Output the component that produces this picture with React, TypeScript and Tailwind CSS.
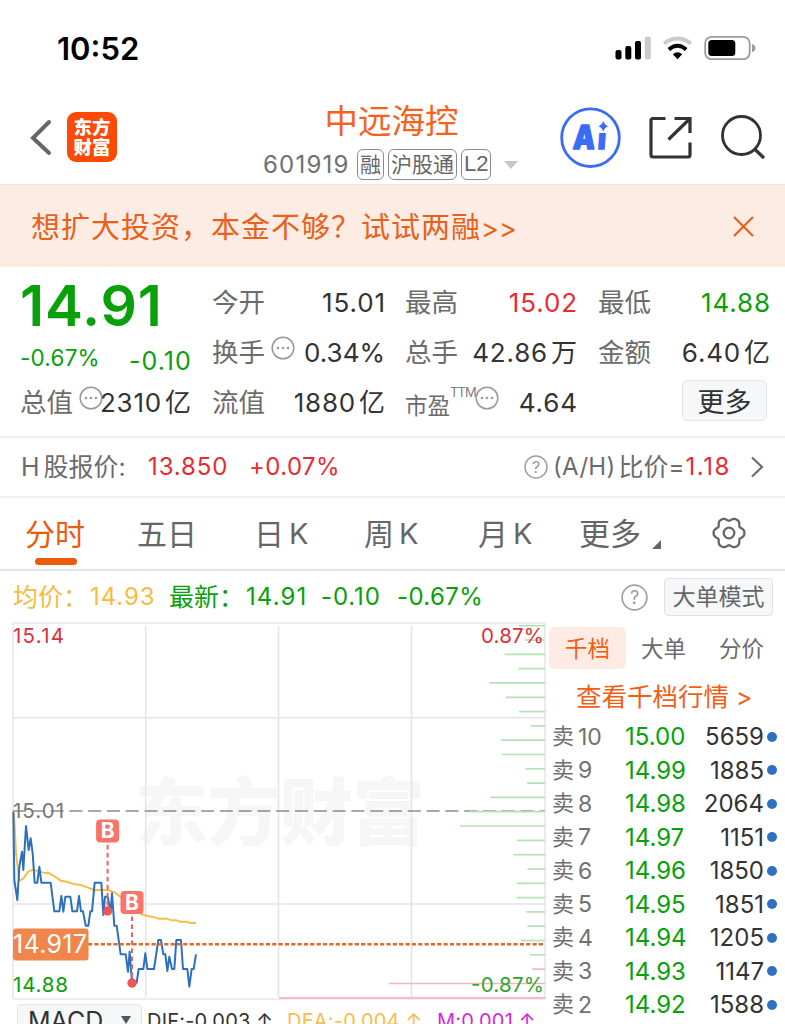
import React from "react";

const DEPTH: [string, string, string][] = [
  ["10", "15.00", "5659"],
  ["9", "14.99", "1885"],
  ["8", "14.98", "2064"],
  ["7", "14.97", "1151"],
  ["6", "14.96", "1850"],
  ["5", "14.95", "1851"],
  ["4", "14.94", "1205"],
  ["3", "14.93", "1147"],
  ["2", "14.92", "1588"],
];

const VOLUME_STARTS = [
  519, 525, 504.7, 518.3, 489.3, 506, 519, 530.7, 501, 502, 525.3, 527, 490.7, 469, 460, 516.7,
  513.7, 527.3, 517, 516.7, 526.3, 527.3, 521, 529.7, 532.3, 389, 279,
];

const PRICE_POINTS =
  "40,125 43,330 52,390 58,290 66,245 70,300 78,168 86,240 92,205 98,250 104,338 112,338 118,290 124,338 152,338 163,424 178,424 184,378 190,425 196,380 211,380 217,424 231,424 237,378 243,424 249,424 257,467 265,467 271,424 276,424 284,338 304,338 310,435 315,380 323,380 332,425 336,370 343,467 350,467 362,553 377,553 384,605 389,545 396,638 410,638 416,597 430,597 436,550 442,597 462,597 475,510 483,510 490,553 496,553 502,603 508,560 516,597 523,597 529,510 543,510 549,597 562,597 568,650 575,597 581,597 588,553";

const AVERAGE_POINTS =
  "42,130 48,250 58,333 70,325 85,305 98,299 115,303 130,308 148,310 165,320 182,332 200,335 220,342 240,344 262,352 282,360 325,360 345,368 358,378 385,400 410,425 430,435 455,440 475,446 500,446 515,451 530,451 540,455 560,455 570,459 588,459";

const GEAR_PATH =
  Array.from({ length: 120 }, (_, i) => {
    const a = (i / 120) * Math.PI * 2;
    const r = 14.1 + 1.6 * Math.cos(6 * a) - 0.3 * Math.cos(12 * a);
    return `${i ? "L" : "M"}${(17 + r * Math.cos(a)).toFixed(2)} ${(17 + r * Math.sin(a)).toFixed(2)}`;
  }).join("") + "Z";

function StatusBar() {
  return (
    <div className="flex h-24 items-center justify-between pr-[29px] pl-[57px]">
      <div className="pt-[1px] text-[31px] font-semibold text-black">10:52</div>
      <svg width="141" height="26" viewBox="615 35 141 26">
        <rect x="615.5" y="50" width="6" height="9.5" rx="2" />
        <rect x="625.3" y="46" width="6" height="13.5" rx="2" />
        <rect x="635" y="41" width="6" height="18.5" rx="2" />
        <rect x="644.8" y="36.5" width="6" height="23" rx="2" fill="#cbcbcb" />
        <path d="M664 43.500Q677.500 33.500 691 43.500" fill="none" stroke="#cbcbcb" strokeWidth="4" />
        <path d="M668.800 49.500Q677.500 42 686.200 49.500" fill="none" stroke="#000" strokeWidth="3.800" />
        <path d="M672.800 54.300Q677.500 50.300 682.200 54.300L677.500 59.300Z" />
        <rect x="705.200" y="36.800" width="44.500" height="22.400" rx="6.500" fill="none" stroke="#9b9b9b" strokeWidth="1.800" />
        <rect x="708.300" y="40" width="27" height="16" rx="3.500" />
        <path d="M752 44v8Q755.500 51 755.500 48T752 44Z" fill="#9b9b9b" />
      </svg>
    </div>
  );
}

function Badge({ children }: { children: React.ReactNode }) {
  return (
    <span className="flex h-[31px] items-center rounded-[6px] border-[1.500px] border-[#8a8a8a] px-[2px] text-[21px] text-[#666]">
      {children}
    </span>
  );
}

function Header() {
  return (
    <div className="flex h-[89px] border-b border-[#e9e5e9]">
      <div className="flex w-[263px] items-start pt-4 pl-[30px]">
        <svg className="mt-[6px]" width="22" height="38" viewBox="0 0 22 38" fill="none" stroke="#666" strokeWidth="4" strokeLinecap="round">
          <path d="M19 4 3 20l16 15" />
        </svg>
        <div className="ml-[15px] flex h-[50px] w-[50px] flex-col items-center justify-center rounded-[9px] bg-[#fe4a04] text-[18.500px] leading-[20.500px] font-black text-white">
          <span>东方</span>
          <span>财富</span>
        </div>
      </div>
      <div className="flex w-[257px] flex-col items-center">
        <div className="mt-[3px] text-[33.500px] leading-[44px] text-[#f4631e]">中远海控</div>
        <div className="mt-[6px] flex items-center self-start">
          <span className="mr-[7px] w-[87px] pt-[1px] text-[24px] tracking-[1.200px] text-[#707070]">601919</span>
          <span className="flex gap-[4px]">
            <Badge>融</Badge>
            <Badge>沪股通</Badge>
            <Badge><span className="font-['Liberation_Sans'] text-[22px]">L2</span></Badge>
          </span>
          <svg className="ml-3 shrink-0" width="16" height="8" viewBox="0 0 16 8">
            <path d="M1 0h14L8 8Z" fill="#c6c6c6" />
          </svg>
        </div>
      </div>
      <svg className="ml-[38px] mt-2" width="212" height="68" viewBox="558 104 212 68" fill="none">
        <circle cx="590.500" cy="137.700" r="28.800" stroke="#3a6cf6" strokeWidth="2.800" />
        <g transform="translate(572.500 148.800) skewX(-4) scale(.84 1)" fill="#3a6cf6" stroke="#3a6cf6" strokeWidth="1.400" strokeLinejoin="round" fontSize="33" fontWeight="900">
          <text x="0 29.500">Ai</text>
        </g>
        <path d="M597.500 119.500h13.500v13.500h-13.500z" fill="#fff" />
        <path d="M603.300 121q1.300 4 5 5.300q-3.700 1.300-5 5.300q-1.300-4-5-5.300q3.700-1.300 5-5.300Z" fill="#3a6cf6" />
        <g stroke="#333" strokeWidth="3.200">
          <path d="M665.500 118.500H653q-2 0-2 2V155q0 2 2 2h35q2 0 2-2V142.500" />
          <path d="M674.500 118.500H690V133M689 119.500 668.500 139.500" />
          <circle cx="741.500" cy="135.500" r="19" strokeWidth="2.800" />
          <path d="M754 148.500l10 9.500" />
        </g>
      </svg>
    </div>
  );
}

function MoreDot({ className = "" }: { className?: string }) {
  return (
    <svg className={"shrink-0 " + className} width="24" height="24" viewBox="0 0 24 24" fill="#999">
      <circle cx="12" cy="12" r="10.800" fill="none" stroke="#999" strokeWidth="1.500" />
      <circle cx="7" cy="12" r="1.300" />
      <circle cx="12" cy="12" r="1.300" />
      <circle cx="17" cy="12" r="1.300" />
    </svg>
  );
}

function Help({ size, className = "" }: { size: number; className?: string }) {
  return (
    <svg className={"shrink-0 " + className} width={size} height={size} viewBox="0 0 24 24">
      <circle cx="12" cy="12" r="11" fill="none" stroke="#a0a0a0" strokeWidth="1.500" />
      <text x="12" y="17.500" textAnchor="middle" fontSize="16" fill="#999">?</text>
    </svg>
  );
}

function Stat({ label, value, tone = "text-[#333]", mark }: { label: string; value: React.ReactNode; tone?: string; mark?: React.ReactNode }) {
  return (
    <div className="flex h-[50px] items-center whitespace-nowrap">
      <span className="text-[26.500px] text-[#6c6c6c]">{label}</span>
      {mark}
      <span className={"ml-auto text-[26px] " + tone}>{value}</span>
    </div>
  );
}

function num(n: string) {
  return <span className="-mr-[1px] tracking-[0.900px]">{n}</span>;
}

function unit(n: string, u: string) {
  return (
    <>
      <span className="tracking-[0.800px]">{n}</span>
      <span className="ml-[3px]">{u}</span>
    </>
  );
}

function Quote() {
  return (
    <div className="flex h-[171px] border-b-2 border-[#efeff2] pt-[11px] pl-5">
      <div className="w-[171px]">
        <div className="h-[54px] text-[57px] leading-[56px] font-semibold tracking-[0.900px] text-[#09a009]">14.91</div>
        <div className="flex h-[46px] justify-between pt-[11px] text-[#09a009]">
          <span className="text-[22.500px] leading-[30px] tracking-[0.200px]">-0.67%</span>
          <span className="-mr-[1px] pt-[2px] text-[25px] leading-[32px] tracking-[1.100px]">-0.10</span>
        </div>
        <Stat label="总值" value={unit("2310", "亿")} mark={<MoreDot className="-mr-6 mb-[10px] ml-[6px]" />} />
      </div>
      <div className="ml-[21px] w-[173px]">
        <Stat label="今开" value={num("15.01")} />
        <Stat label="换手" value="0.34%" mark={<MoreDot className="mb-[10px] ml-[6px]" />} />
        <Stat label="流值" value={unit("1880", "亿")} />
      </div>
      <div className="ml-5 w-[172px]">
        <Stat label="最高" value={num("15.02")} tone="text-[#e62c33]" />
        <Stat label="总手" value={unit("42.86", "万")} />
        <div className="flex h-[50px] items-center">
          <span className="w-[45px] pt-[5px] text-[22.500px] text-[#6c6c6c]">市盈</span>
          <span className="mb-[21px] w-[25px] text-[13px] tracking-[-0.900px] text-[#808080]">TTM</span>
          <MoreDot className="mb-[10px]" />
          <span className="ml-auto text-[26px] text-[#333]">{num("4.64")}</span>
        </div>
      </div>
      <div className="ml-[21px] w-[172px]">
        <Stat label="最低" value={num("14.88")} tone="text-[#09a009]" />
        <Stat label="金额" value={unit("6.40", "亿")} />
        <div className="mt-[2px] ml-[84px] flex h-[41px] w-[85px] items-center justify-center rounded-[5px] border-[1.500px] border-[#e3e3e9] bg-[#f6f7f9] pt-[6px] text-[27px] text-[#333]">更多</div>
      </div>
    </div>
  );
}

function HShare() {
  return (
    <div className="flex h-[60px] items-center border-b-2 border-[#efeff2] pl-[21px] text-[24px] whitespace-nowrap text-[#6c6c6c]">
      <span className="w-[127px] text-[25px]">H<span className="ml-1">股报价:</span></span>
      <span className="w-[101px] tracking-[0.900px] text-[#e62c33]">13.850</span>
      <span className="w-[275px] tracking-[0.400px] text-[#e62c33]">+0.07%</span>
      <Help size={24} />
      <span className="ml-[5px] text-[24px] tracking-[0.300px]">(A/H)</span>
      <span className="ml-[3px] text-[25px]">比价</span>
      <span>=</span>
      <span className="ml-[1px] w-[45px] tracking-[1.600px] text-[#e62c33]">1.18</span>
      <svg className="ml-5" width="14" height="22" viewBox="0 0 14 22" fill="none" stroke="#6c6c6c" strokeWidth="2.200">
        <path d="M2 1.500 12 11 2 20.500" />
      </svg>
    </div>
  );
}

function Tabs() {
  return (
    <div className="flex h-[73px] items-start border-b-2 border-[#e3e3e8] pl-[25px] text-[30px] leading-[44px] whitespace-nowrap text-[#666]">
      <div className="mt-[14px] flex w-[112px] flex-col text-[#ec5a0b]">
        <span>分时</span>
        <span className="mt-[2px] ml-[10px] h-[7px] w-[42px] rounded-full bg-[#ec5a0b]" />
      </div>
      <span className="mt-[14px] w-[117px]">五日</span>
      <span className="mt-[14px] flex w-[110px] gap-[5px]">日<span className="text-[29px]">K</span></span>
      <span className="mt-[14px] flex w-[114px] gap-[5px]">周<span className="text-[29px]">K</span></span>
      <span className="mt-[14px] flex w-[101px] gap-[5px]">月<span className="text-[29px]">K</span></span>
      <span className="mt-[14px] w-[73px] text-[31px]">更多</span>
      <svg className="mt-[42px]" width="9" height="9" viewBox="0 0 9 9">
        <path d="M9 0v9H0Z" fill="#666" />
      </svg>
      <svg className="mt-[18px] ml-[51px]" width="34" height="34" viewBox="0 0 34 34" fill="none" stroke="#666" strokeWidth="2.300">
        <path d={GEAR_PATH} />
        <circle cx="17" cy="17" r="5.300" />
      </svg>
    </div>
  );
}

function Summary() {
  return (
    <div className="flex h-[51px] items-center pt-[1px] pl-[13px] text-[24px] whitespace-nowrap text-[#09a009]">
      <span className="w-[77px] text-[25px] text-[#f6bb42]">均价：</span>
      <span className="w-[79px] tracking-[0.900px] text-[#f6bb42]">14.93</span>
      <span className="w-[77px] text-[25px]">最新：</span>
      <span className="w-[75px] tracking-[1.100px]">14.91</span>
      <span className="w-[76px] tracking-[0.900px]">-0.10</span>
      <span className="w-[224px] tracking-[0.400px]">-0.67%</span>
      <Help size={27} />
      <span className="ml-4 flex h-[38px] w-[109px] items-center justify-center rounded-[4px] border-[1.500px] border-[#dfe2ea] bg-[#f6f7f9] pt-[2px] text-[23px] text-[#666]">大单模式</span>
    </div>
  );
}

function BuyMark({ x, y, end }: { x: number; y: number; end: number }) {
  return (
    <g>
      <path d={`M${x} ${y + 14}V${end}`} stroke="#ec5f5f" strokeWidth="2" strokeDasharray="4.500 3.500" />
      <circle cx={x} cy={end} r="4.700" fill="#ee5555" />
      <rect x={x - 11.500} y={y - 11.500} width="23" height="23" rx="4" fill="#fa7468" />
      <text x={x} y={y + 7.300} textAnchor="middle" fontSize="21" fontWeight="700" fill="#fff">B</text>
    </g>
  );
}

function Chart() {
  return (
    <svg className="shrink-0" width="546" height="379" viewBox="0 622 546 379" fill="none">
      <text x="135" y="839" fontSize="73" fontWeight="900" fill="#f6f6f7" textLength="290">东方财富</text>
      <g stroke="#e4e4ee" strokeWidth="1.600">
        <path d="M13 623V999M545 623V999M13 999H545M13 623H545" stroke="#e6e6ec" />
        <path d="M145.700 626V997M278.500 626V997M411.500 626V997M13 717.700H545M13 904H545" />
      </g>
      <path d="M13 811H545" stroke="#8c8c8c" strokeWidth="1.500" strokeDasharray="13 5.800" />
      {VOLUME_STARTS.map((x, i) => (
        <path key={i} d={`M${x} ${(625.7 + i * 14.31).toFixed(1)}H545`} stroke={i > 23 ? "#f3b7ba" : "#b5e2b5"} strokeWidth="1.700" />
      ))}
      <g transform="translate(0 770) scale(.33333)" strokeWidth="6" strokeLinejoin="round">
        <polyline points={AVERAGE_POINTS} stroke="#f6bd4a" />
        <polyline points={PRICE_POINTS} stroke="#2f70bd" />
      </g>
      <path d="M88 944.300H545" stroke="#dc6a28" strokeWidth="2.600" strokeDasharray="4.200 2.150" />
      <rect x="13" y="928.500" width="75.500" height="32" rx="3" fill="#f0864b" />
      <text x="13" y="953" fontSize="25" fill="#fff" textLength="74">14.917</text>
      <BuyMark x={107.600} y={831} end={911} />
      <BuyMark x={132} y={902.500} end={983} />
      <text x="13" y="643" fontSize="20.500" fill="#dd3038" textLength="51">15.14</text>
      <text x="481" y="643" fontSize="20.500" fill="#dd3038" textLength="63">0.87%</text>
      <text x="13" y="817.500" fontSize="20.500" fill="#777" textLength="51">15.01</text>
      <text x="13" y="991.500" fontSize="20.500" fill="#09a009" textLength="55">14.88</text>
      <text x="471" y="991.500" fontSize="20.500" fill="#2fa52f" textLength="73">-0.87%</text>
    </svg>
  );
}

function Indicators() {
  return (
    <div className="flex h-[24px] items-start overflow-hidden pt-[3px] pl-[17px] text-[20px] whitespace-nowrap">
      <div className="flex h-[40px] w-[125px] shrink-0 items-start rounded-[4px] border-[1.500px] border-[#e3e3e9] bg-[#f6f7f9] pl-[10px] text-[#333]">
        <span className="w-[93px] text-[25px] leading-[32px]">MACD</span>
        <svg className="mt-[11px]" width="10" height="8" viewBox="0 0 10 8"><path d="M0 0h10L5 8Z" fill="#555" /></svg>
      </div>
      <span className="ml-[5px] w-[140px] pt-[2px] leading-[30px] tracking-[0.200px] text-[#333]">DIF:-0.003 ↑</span>
      <span className="w-[150px] pt-[2px] leading-[30px] tracking-[0.200px] text-[#f6bd4a]">DEA:-0.004 ↑</span>
      <span className="pt-[2px] leading-[30px] tracking-[0.200px] text-[#cf2bd6]">M:0.001 ↑</span>
    </div>
  );
}

function OrderBook() {
  return (
    <div className="flex-1 pt-[5px] pl-[3px]">
      <div className="flex h-[42px] items-center text-[22.500px] text-[#6c6c6c]">
        <span className="flex h-[42px] w-[77px] items-center justify-center rounded-[5px] bg-[#feece4] text-[#f25e14]">千档</span>
        <span className="ml-[15px] w-[78px]">大单</span>
        <span>分价</span>
      </div>
      <div className="flex h-[51px] items-center pt-[5px] pl-[27px] text-[25.500px] whitespace-nowrap text-[#f25e14]">
        查看千档行情<span className="ml-[7px] text-[25px]">&gt;</span>
      </div>
      {DEPTH.map(([level, price, volume]) => (
        <div key={level} className="flex h-[33.500px] items-center pl-[3px] text-[24px] whitespace-nowrap">
          <span className="w-[26px] pb-[1px] text-[22px] text-[#707070]">卖</span>
          <span className="w-[47px] pt-[2px] text-[23px] text-[#707070]">{level}</span>
          <span className="w-[59px] pt-[2px] text-[#09a009]">{price}</span>
          <span className="w-[80px] pt-[2px] text-right text-[#333]">{volume}</span>
          <span className="ml-[3px] h-[10px] w-[10px] shrink-0 rounded-full bg-[#2f70c1]" />
        </div>
      ))}
    </div>
  );
}

export default function App() {
  return (
    <div className="h-[1024px] w-[785px] overflow-hidden bg-white font-['Inter','Noto_Sans_CJK_SC',sans-serif] leading-[1.2]">
      <StatusBar />
      <Header />
      <div className="flex h-[82px] items-center bg-[#fdece4] pr-[31px] pl-[31px] text-[29px] tracking-[1px] whitespace-nowrap text-[#e8611a]">
        <span className="pt-[4px]">想扩大投资，本金不够？试试两融<span className="text-[27px] tracking-[0px]">&gt;&gt;</span></span>
        <svg className="ml-auto" width="21" height="21" viewBox="0 0 21 21" stroke="#e8611a" strokeWidth="2.200">
          <path d="M1 1 20 20M20 1 1 20" />
        </svg>
      </div>
      <Quote />
      <HShare />
      <Tabs />
      <Summary />
      <div className="flex h-[402px]">
        <div className="w-[546px]">
          <Chart />
          <Indicators />
        </div>
        <OrderBook />
      </div>
    </div>
  );
}
